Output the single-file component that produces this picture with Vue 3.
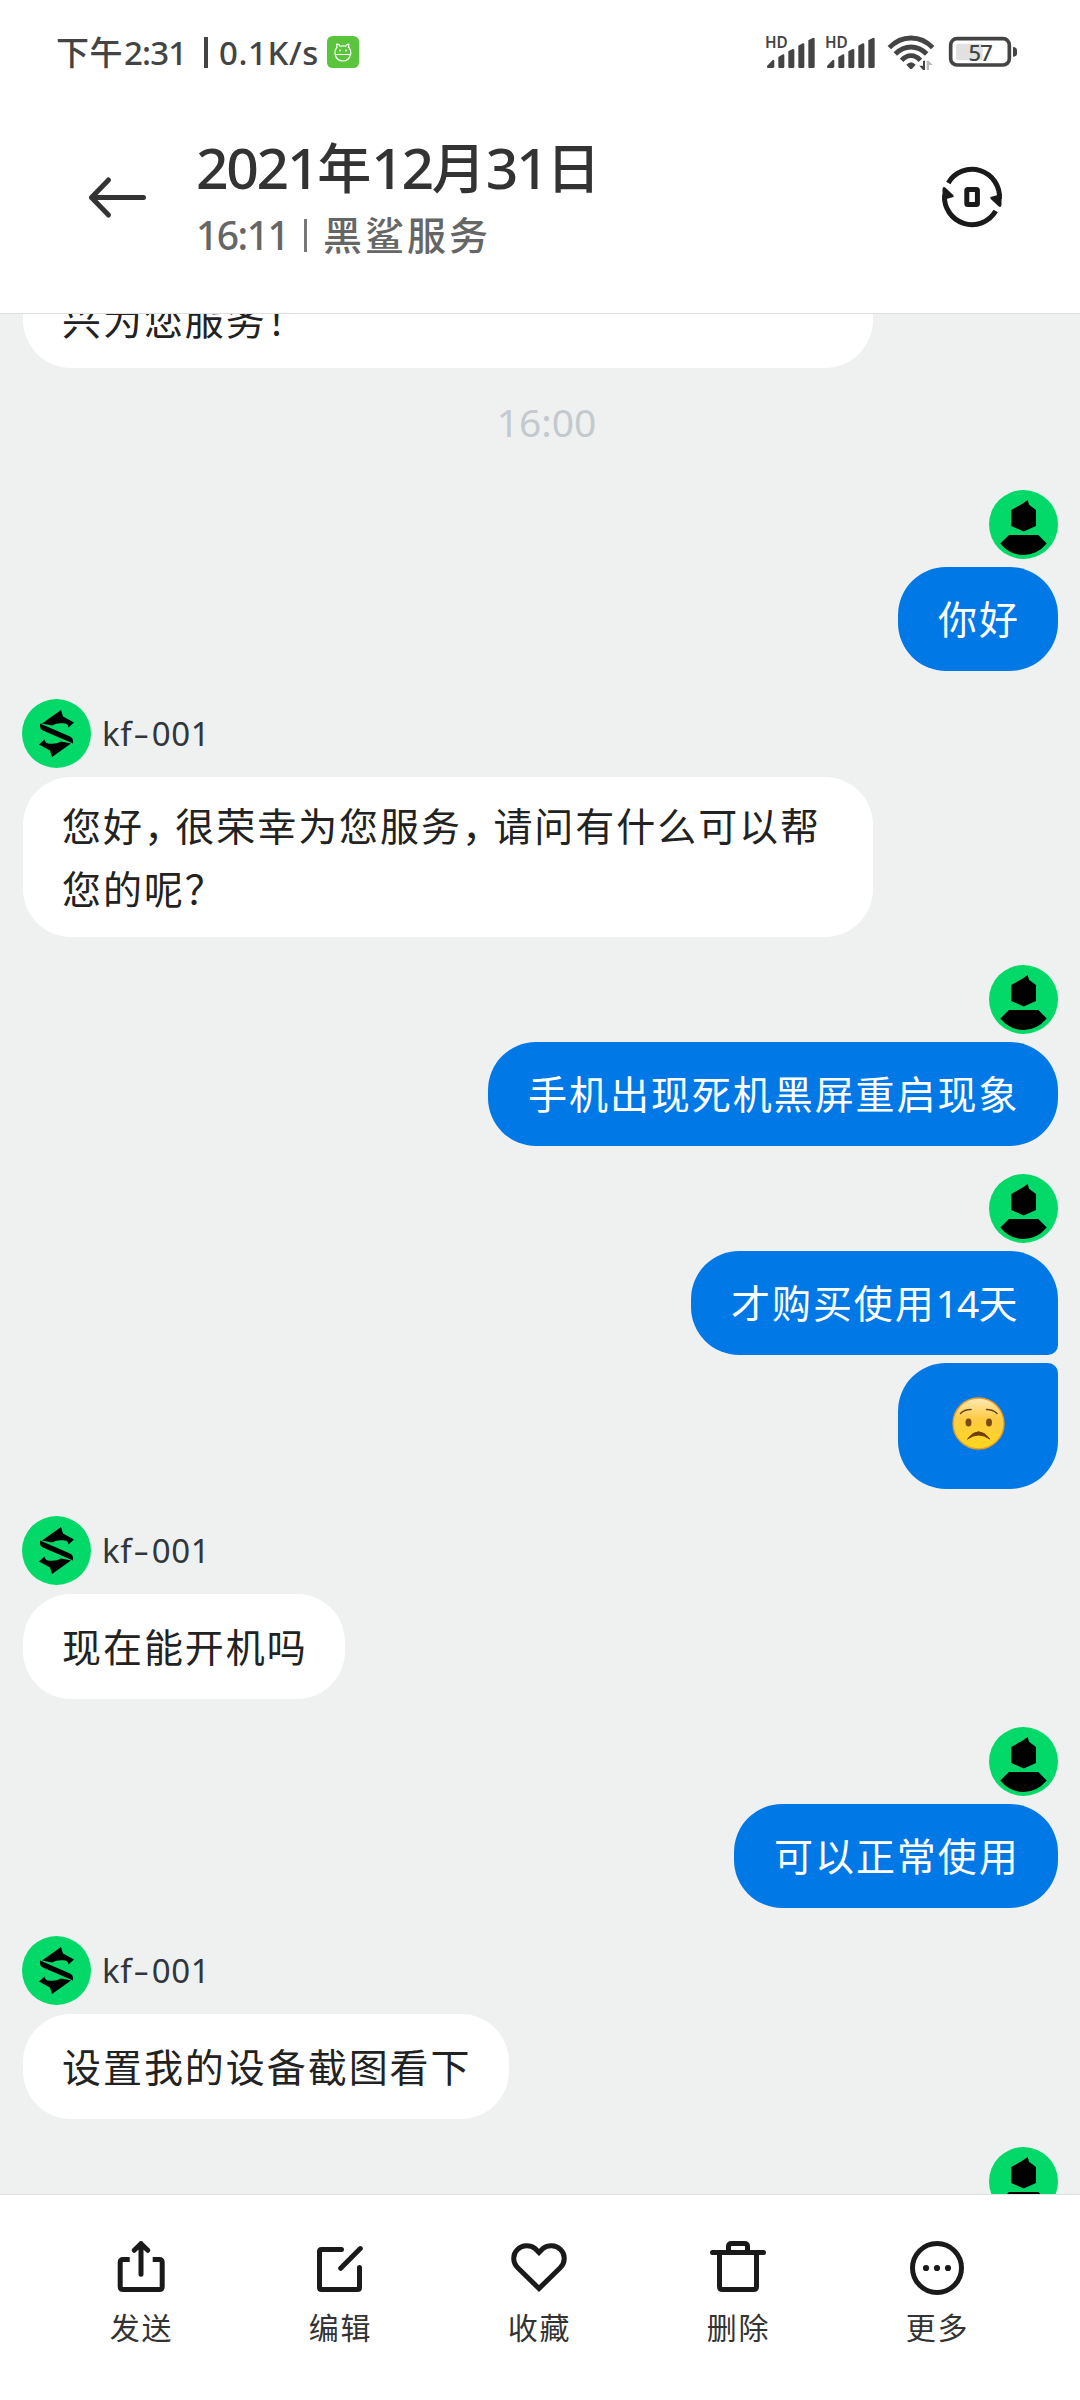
<script setup>
const messages = [
  { side: 'right', bubbles: [{ text: '你好', w: 160 }] },
  { side: 'left', bubbles: [{ text: '您好，很荣幸为您服务，请问有什么可以帮您的呢？', w: 850, tall: true }] },
  { side: 'right', bubbles: [{ text: '手机出现死机黑屏重启现象', w: 570 }] },
  { side: 'right', bubbles: [{ text: '才购买使用14天', w: 367, pos: 'first' }, { emoji: true, w: 160, pos: 'last' }] },
  { side: 'left', bubbles: [{ text: '现在能开机吗', w: 322 }] },
  { side: 'right', bubbles: [{ text: '可以正常使用', w: 324 }] },
  { side: 'left', bubbles: [{ text: '设置我的设备截图看下', w: 486 }] },
  { side: 'right', bubbles: [] },
]
const pieces = (t) => t.split(/(，|\d+)/).filter(Boolean)
const kind = (p) => (p === '，' ? 'comma' : /\d/.test(p) ? 'num' : '')
</script>

<template>
  <div class="screen">
    <header class="top">
      <div class="status">
        <div class="status-left">
          <span class="clock">下午<span class="t">2:31</span></span>
          <i class="sep"></i>
          <span class="speed">0.1K/s</span>
          <svg class="app" width="32" height="32" viewBox="0 0 32 32">
            <rect width="32" height="32" rx="5.5" fill="#5ac53c" />
            <g fill="none" stroke="#fff" stroke-width="1.2" stroke-linecap="round" stroke-linejoin="round">
              <path d="M10 11 9.600 8.200 12 8.600 13 10.300Q16 9.400 18.500 10.300L20 8.600 22 8.200 21.500 11Q24.300 14 23.700 18Q22 25 16 25Q9.500 25 8 18Q7.500 14 10 11ZM8 18.500H23.700" />
            </g>
            <circle cx="13" cy="14.500" r="1" fill="#fff" /><circle cx="19" cy="14.500" r="1" fill="#fff" />
          </svg>
        </div>
        <div class="status-right">
          <svg v-for="n in 2" :key="n" class="signal" width="50" height="36" viewBox="75 45 150 108" fill="#444">
            <text x="75" y="84" class="hd">HD</text>
            <path d="M81 138 98 120Q103 118 103 124V139Q103 144 98 144H84Q80 144 81 138Z" />
            <path d="M115 111 129 103Q133 102 133 107V140Q133 144 129 144H119Q115 144 115 140Z" />
            <path d="M145 94 158 87Q163 86 163 91V140Q163 144 159 144H149Q145 144 145 140Z" />
            <path d="M175 77 188 70Q193 68 193 74V140Q193 144 189 144H179Q175 144 175 140Z" />
            <path d="M205 61 218 54Q224 51 224 58V140Q224 144 220 144H209Q205 144 205 140Z" />
          </svg>
          <svg class="wifi" width="48" height="36" viewBox="441 45 144 108" fill="none" stroke="#444" stroke-width="14.5">
            <path d="M448 83Q476 54 513 54T578 83M466 102Q487 81 513 81T560 102M485 121Q497 107 513 107T541 121" />
            <path d="M499 134Q513 119 527 134L516 146Q513 148 510 146Z" fill="#444" stroke="none" />
            <path d="M549 122H555V150H549L538 137H549Z" fill="#444" stroke="none" />
            <path d="M560 122H566L578 135H567V150H560Z" fill="#bbb" stroke="none" />
          </svg>
          <svg class="battery" width="70" height="36" viewBox="624 45 210 108">
            <rect x="648" y="71" width="80" height="50" rx="6" fill="#e1e1e1" />
            <rect x="632" y="56" width="176" height="79" rx="19" fill="none" stroke="#444" stroke-width="11" />
            <path d="M819 81Q831 82 831 91V101Q831 109 819 110Z" fill="#444" />
            <text x="721" y="122" class="pct">57</text>
          </svg>
        </div>
      </div>
      <div class="titlebar">
        <svg class="back" width="60" height="44" viewBox="0 0 60 44" fill="none" stroke="#333" stroke-width="5" stroke-linecap="round" stroke-linejoin="round">
          <path d="M55.500 22.500H3.500M20.500 5 3.500 22.500 20.500 40" />
        </svg>
        <div class="titles">
          <h1><span>2021</span>年<span>12</span>月<span>31</span>日</h1>
          <p><span class="time">16:11</span><i></i><span class="src">黑鲨服务</span></p>
        </div>
        <svg class="rotate" width="70" height="70" viewBox="0 0 70 70" fill="none" stroke="#1a1a1a" stroke-width="5">
          <path d="M11.300 20.900A27.500 27.500 0 0 1 62.400 37" />
          <path d="M58.700 49.100A27.500 27.500 0 0 1 7.600 33" />
          <path d="M53.500 35 64.500 32 64.500 43Q64 46 61.500 44.300L53.800 37Q53 36 53.500 35ZM16.500 35 5.500 38 5.500 27Q6 24 8.500 25.700L16.200 33Q17 34 16.500 35Z" fill="#1a1a1a" stroke="none" />
          <rect x="29.800" y="27.500" width="10.600" height="15" rx="1" />
        </svg>
      </div>
    </header>

    <main class="chat">
      <div class="bubble cut"><span>兴为您服务！</span></div>
      <div class="stamp">16:00</div>
      <section v-for="(m, i) in messages" :key="i" :class="['msg', m.side]">
        <div class="who">
          <svg v-if="m.side === 'right'" width="69" height="69" viewBox="0 0 69 69">
            <circle cx="34.500" cy="34.500" r="34.500" fill="#03d968" />
            <path d="M22.300 20 33.700 13.500 38.700 10 40 14.700 47 20V36L34.700 41.500 22.300 36Z" />
            <path d="M20 45H49.300L57.700 53.500Q48 65 34.500 65T11.300 53.500Z" />
          </svg>
          <svg v-else width="69" height="69" viewBox="0 0 69 69">
            <circle cx="34.500" cy="34.500" r="34.500" fill="#03d968" />
            <path d="M20 24.500 39 11 41 17.500 52 23.500 46.500 28.500Q46 24.300 41 24.300Q35 23.500 30 26.500Z" />
            <path d="M49 44.500 30 58 28 51.500 17 45.500 22.500 40.500Q23 44.700 28 44.700Q34 45.500 39 42.500Z" />
            <path d="M18 24.500 48 37.500Q51 39 51 41.500V44.500L21 31.500Q18 30 18 27.500Z" />
          </svg>
          <span v-if="m.side === 'left'" class="name">kf<em>-</em>001</span>
        </div>
        <div
          v-for="(b, j) in m.bubbles"
          :key="j"
          :class="['bubble', b.pos, { tall: b.tall, emoji: b.emoji }]"
          :style="{ width: b.w + 'px' }"
        >
          <svg v-if="b.emoji" width="53" height="53" viewBox="0 0 53 53">
            <defs>
              <linearGradient id="face" x1="0" y1="0" x2="0" y2="1">
                <stop offset="0" stop-color="#fdeab8" />
                <stop offset=".4" stop-color="#fdcb45" />
                <stop offset="1" stop-color="#fdd71c" />
              </linearGradient>
            </defs>
            <circle cx="26.500" cy="26.500" r="25.500" fill="url(#face)" stroke="#eb9a24" stroke-width="1.400" />
            <ellipse cx="16.500" cy="25.500" rx="3" ry="4" fill="#7a4a12" /><ellipse cx="37" cy="25.500" rx="3" ry="4" fill="#7a4a12" />
            <path d="M8.500 16.500Q12 12.500 19 12.500M45 16.500Q41 12.500 34.500 12.500" fill="none" stroke="#6b4415" stroke-width="1.600" stroke-linecap="round" />
            <path d="M15.500 42Q26.500 27.500 37.800 42Q26.500 34 15.500 42Z" fill="#6e3c10" stroke="#6e3c10" stroke-linejoin="round" />
          </svg>
          <p v-else><span v-for="(p, k) in pieces(b.text)" :key="k" :class="kind(p)">{{ p }}</span></p>
        </div>
      </section>
    </main>

    <nav class="tools">
      <div class="tool">
        <svg viewBox="0 0 60 60"><path class="butt" d="M18.700 21.500H12.200Q9.200 21.500 9.200 24.500V48.500Q9.200 51.500 12.200 51.500H48.200Q51.200 51.500 51.200 48.500V24.500Q51.200 21.500 48.200 21.500H41.700" /><path d="M30 5.500V36.200M23.200 12.300 30 5.700 36.800 12.300" /></svg>
        <span>发送</span>
      </div>
      <div class="tool">
        <svg viewBox="0 0 60 60"><path d="M31.500 11.400H11.500Q9.500 11.400 9.500 13.400V49.500Q9.500 51.500 11.500 51.500H47.500Q49.500 51.500 49.500 49.500V29.500M30.700 30.300 50.300 10.600" /></svg>
        <span>编辑</span>
      </div>
      <div class="tool">
        <svg viewBox="0 0 60 60"><path class="heart" d="M30 50.500 9 30C3.500 24.500 3.300 16.500 8.500 11.500C13.500 6.700 21 6.700 26 10.500L30 14.500 34 10.500C39 6.700 46.500 6.700 51.500 11.500C56.700 16.500 56.500 24.500 51 30Z" /></svg>
        <span>收藏</span>
      </div>
      <div class="tool">
        <svg viewBox="0 0 60 60"><path d="M4.500 14.500H55.500M11.500 14.500V48.500Q11.500 51.500 14.500 51.500H45.500Q48.500 51.500 48.500 48.500V14.500M20.500 13.500V8.500Q20.500 5.500 23.500 5.500H36.500Q39.500 5.500 39.500 8.500V13.500" /></svg>
        <span>删除</span>
      </div>
      <div class="tool">
        <svg viewBox="0 0 60 60"><circle cx="30" cy="30" r="24.500" /><g fill="#1a1a1a" stroke="none"><circle cx="19" cy="30" r="3.100" /><circle cx="30" cy="30" r="3.100" /><circle cx="41" cy="30" r="3.100" /></g></svg>
        <span>更多</span>
      </div>
    </nav>
  </div>
</template>

<style>
body { background: #fff; }
</style>

<style scoped>
.screen {
  width: 1080px;
  height: 2400px;
  display: flex;
  flex-direction: column;
  overflow: hidden;
  background: #fff;
  font-family: "Noto Sans", "Noto Sans CJK SC", sans-serif;
}
svg { display: block; flex: none; }
h1, p { margin: 0; }
i, em { font-style: normal; font-weight: inherit; }

.top { height: 313px; flex: none; border-bottom: 1px solid #dfe1e1; }
.status {
  height: 104px;
  padding: 0 62px 0 56px;
  display: flex;
  justify-content: space-between;
  align-items: center;
  box-sizing: border-box;
}
.status-left { display: flex; align-items: center; color: #444; font-size: 33px; line-height: 40px; font-weight: 500; }
.clock, .speed { white-space: nowrap; padding-top: 1px; }
.clock { width: 133px; letter-spacing: .5px; }
.clock .t { letter-spacing: -.8px; margin-left: 1px; }
.sep { width: 4px; height: 31px; margin: 0 11px 0 15px; background: #444; }
.speed { width: 108px; letter-spacing: .6px; }
.status-right { display: flex; align-items: center; height: 36px; margin-top: 2px; }
.signal { margin-right: 10px; overflow: visible; }
.wifi { margin: 0 13px 0 2px; overflow: visible; }
.hd { font: 600 46px "Noto Sans", sans-serif; }
.pct { font: 500 66px "Noto Sans", sans-serif; text-anchor: middle; fill: #444; letter-spacing: -2px; }

.titlebar { height: 209px; display: flex; align-items: flex-start; }
.back { margin: 71px 48px 0 88px; }
.titles { flex: 1; }
h1 { margin-top: 25px; height: 76px; line-height: 76px; font-size: 54px; font-weight: 500; color: #333; white-space: nowrap; }
h1 span { font-size: 57px; letter-spacing: -2.300px; }
.titles p { display: flex; align-items: center; height: 50px; line-height: 50px; margin-top: 5px; font-size: 39px; color: #666; white-space: nowrap; }
.titles .time { width: 92px; letter-spacing: -1.500px; font-weight: 500; font-size: 39px; }
.titles i { width: 3px; height: 33px; margin: 0 16px 0 16px; background: #777; }
.src { letter-spacing: 3px; font-weight: 500; }
.rotate { margin: 58px 73px 0 0; }

.chat { flex: none; height: 1880px; overflow: hidden; background: #eff1f1; display: flex; flex-direction: column; }
.bubble {
  display: flex;
  align-items: center;
  flex: none;
  height: 104px;
  padding: 1px 30px 0 39px;
  box-sizing: border-box;
  border-radius: 48px;
  font-size: 39px;
  line-height: 62.500px;
  letter-spacing: 1.950px;
}
.left .bubble, .cut { background: #fff; color: #222; }
.left .bubble { height: 105px; }
.left .bubble.tall { height: 160px; }
.right .bubble { background: #0079e7; color: #fff; padding-left: 40px; }
.cut { width: 850px; height: 104px; margin: -50px 0 0 23px; padding-top: 9px; align-self: flex-start; }
.comma { letter-spacing: -7.600px; }
.num { letter-spacing: -1px; }
.stamp { height: 56px; margin: 26px 0 40px; padding-left: 13px; line-height: 56px; text-align: center; font-size: 39px; letter-spacing: 0; color: #c3cacf; }
.msg { display: flex; flex-direction: column; flex: none; margin-bottom: 28px; gap: 8px; }
.msg.right { align-items: flex-end; padding-right: 22px; }
.msg.left { align-items: flex-start; padding-left: 22px; gap: 9px; }
.left .bubble { margin-left: 1px; }
.who { display: flex; align-items: center; height: 69px; }
.name { margin-left: 11px; font-size: 33px; line-height: 40px; color: #30363c; letter-spacing: .700px; }
.name em { display: inline-block; transform: scaleX(1.500); margin: 0 4px; }
.first { border-bottom-right-radius: 10px; }
.last { border-top-right-radius: 10px; }
.right .emoji { height: 126px; padding: 0 0 6px; justify-content: center; margin-bottom: -1px; }

.tools { flex: none; height: 206px; box-sizing: border-box; border-top: 1px solid #dfe1e1; display: flex; padding-left: 41px; background: #fff; }
.tool { width: 199px; display: flex; flex-direction: column; align-items: center; padding-top: 43px; box-sizing: border-box; }
.tool svg { width: 60px; height: 60px; fill: none; stroke: #1a1a1a; stroke-width: 5; stroke-linecap: round; stroke-linejoin: round; }
.tool .butt { stroke-linecap: butt; }
.tool .heart { stroke-linejoin: miter; }
.tool span { margin: 8px 0 0 2px; font-size: 30px; line-height: 44px; letter-spacing: 1.700px; color: #333; }
</style>
